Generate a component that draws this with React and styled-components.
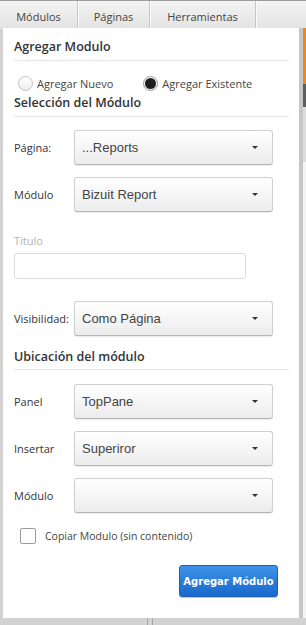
import React from "react";
import styled, { createGlobalStyle } from "styled-components";

const Global = createGlobalStyle`
  html, body { margin: 0; padding: 0; }
  body {
    background: #d2d2d2;
    width: 306px;
    height: 625px;
    overflow: hidden;
    font-family: "Open Sans", "DejaVu Sans", sans-serif;
  }
  * { box-sizing: border-box; }
`;

const Page = styled.div`
  width: 306px;
  height: 625px;
  display: flex;
  flex-direction: column;
  background: #d2d2d2;
`;

const TabBar = styled.div`
  height: 29px;
  display: flex;
  border-top: 1px solid #9c9c9c;
  background: linear-gradient(#f3f3f3, #e3e3e3);
  flex: none;
`;

const Tab = styled.div`
  width: ${(p) => p.$w}px;
  height: 100%;
  display: flex;
  align-items: center;
  justify-content: center;
  padding-top: 2px;
  font-size: 11px;
  color: #444;
  border-right: 1px solid #c6c6c6;
  box-shadow: 1px 0 0 #fafafa;
`;

const Body = styled.div`
  flex: 1;
  display: flex;
  margin-top: -1px;
`;

const Gutter = styled.div`
  width: 3px;
  flex: none;
`;

const Panel = styled.div`
  width: 296px;
  height: 590px;
  flex: none;
  background: #fff;
  padding: 10px 10px 0 11px;
  display: flex;
  flex-direction: column;
`;

const Shadow = styled.div`
  width: 4px;
  flex: none;
  background: #c6c6c6;
`;

const Strip = styled.div`
  width: 3px;
  flex: none;
  display: flex;
  flex-direction: column;
`;

const StripBlock = styled.div`
  height: ${(p) => p.$h}px;
  background: ${(p) => p.$c};
  flex: none;
`;

const Heading = styled.div`
  font-family: "Open Sans", sans-serif;
  font-weight: 600;
  font-size: 12.5px;
  line-height: 18px;
  color: #333;
  padding-bottom: ${(p) => p.$pb ?? 4}px;
  margin-top: ${(p) => p.$mt ?? 0}px;
  border-bottom: 1px solid #e6e6e6;
`;

const RadioRow = styled.div`
  margin-top: 12px;
  height: 20px;
  display: flex;
  align-items: center;
  padding-left: 4px;
  gap: 30px;
`;

const RadioItem = styled.label`
  display: flex;
  align-items: center;
  gap: 4px;
  font-size: 11px;
  color: #444;
`;

const RadioCircle = styled.span`
  width: 15px;
  height: 15px;
  border-radius: 50%;
  border: 1px solid ${(p) => (p.$checked ? "#999" : "#c4c4c4")};
  background: linear-gradient(#fff, #ededed);
  display: flex;
  align-items: center;
  justify-content: center;
  &::after {
    content: "";
    display: ${(p) => (p.$checked ? "block" : "none")};
    width: 11px;
    height: 11px;
    border-radius: 50%;
    background: #1e1e1e;
  }
`;

const FieldRow = styled.div`
  display: flex;
  align-items: center;
  margin-top: ${(p) => p.$mt}px;
`;

const Label = styled.div`
  width: 60px;
  flex: none;
  font-size: 11px;
  color: #333;
`;

const Select = styled.div`
  width: 199px;
  height: 35px;
  border: 1px solid #cfcfcf;
  border-bottom-color: #b5b5b5;
  border-radius: 3px;
  background: linear-gradient(#ffffff, #ececec);
  box-shadow: 0 1px 1px rgba(0, 0, 0, 0.08);
  display: flex;
  align-items: center;
  justify-content: space-between;
  padding: 0 14px 0 7px;
  font-family: "Liberation Sans", Arial, sans-serif;
  font-size: 13px;
  font-weight: normal;
  color: #444;
`;

const Caret = styled.span`
  width: 0;
  height: 0;
  border-left: 3.5px solid transparent;
  border-right: 3.5px solid transparent;
  border-top: 3.5px solid #333;
`;

const FadedLabel = styled.div`
  margin-top: 22px;
  font-size: 11px;
  line-height: 14px;
  color: #b3b3b3;
`;

const TextInput = styled.div`
  margin-top: 5px;
  width: 232px;
  height: 26px;
  border: 1px solid #dcdcdc;
  border-radius: 3px;
  background: #fff;
`;

const CheckRow = styled.label`
  margin-top: 15px;
  padding-left: 6px;
  display: flex;
  align-items: center;
  gap: 9px;
  font-size: 10.5px;
  color: #444;
`;

const CheckBox = styled.span`
  width: 16px;
  height: 16px;
  border: 1px solid #9a9a9a;
  border-radius: 2px;
  background: #fff;
`;

const ButtonRow = styled.div`
  margin-top: 21px;
  display: flex;
  justify-content: flex-end;
  padding-right: 11px;
`;

const Button = styled.button`
  width: 99px;
  height: 32px;
  border: 1px solid #1c5fb3;
  border-radius: 3px;
  background: linear-gradient(#3d93e6, #1a68cc);
  box-shadow: 0 1px 1px rgba(0, 0, 0, 0.25);
  color: #fff;
  font-family: "DejaVu Sans", sans-serif;
  font-weight: bold;
  font-size: 10px;
  padding: 0;
`;

const Footer = styled.div`
  flex: 1;
  display: flex;
  padding-left: 147px;
  gap: 4px;
`;

const Tick = styled.div`
  width: 1px;
  height: 100%;
  background: #a8a8a8;
`;

export default function App() {
  const fields1 = [
    { label: "Página:", value: "...Reports", mt: 13 },
    { label: "Módulo", value: "Bizuit Report", mt: 12 },
  ];
  const fields2 = [
    { label: "Panel", value: "TopPane", mt: 14 },
    { label: "Insertar", value: "Superiror", mt: 12 },
    { label: "Módulo", value: "", mt: 12 },
  ];
  return (
    <>
      <Global />
      <Page>
        <TabBar>
          <Tab $w={78}>Módulos</Tab>
          <Tab $w={72}>Páginas</Tab>
          <Tab $w={106}>Herramientas</Tab>
        </TabBar>
        <Body>
          <Gutter />
          <Panel>
            <Heading>Agregar Modulo</Heading>
            <RadioRow>
              <RadioItem>
                <RadioCircle />
                Agregar Nuevo
              </RadioItem>
              <RadioItem>
                <RadioCircle $checked />
                Agregar Existente
              </RadioItem>
            </RadioRow>
            <Heading $mt={1}>Selección del Módulo</Heading>
            {fields1.map((f) => (
              <FieldRow key={f.label + f.value} $mt={f.mt}>
                <Label>{f.label}</Label>
                <Select>
                  <span>{f.value}</span>
                  <Caret />
                </Select>
              </FieldRow>
            ))}
            <FadedLabel>Titulo</FadedLabel>
            <TextInput />
            <FieldRow $mt={22}>
              <Label>Visibilidad:</Label>
              <Select>
                <span>Como Página</span>
                <Caret />
              </Select>
            </FieldRow>
            <Heading $mt={12} $pb={3}>Ubicación del módulo</Heading>
            {fields2.map((f) => (
              <FieldRow key={f.label + f.value} $mt={f.mt}>
                <Label>{f.label}</Label>
                <Select>
                  <span>{f.value}</span>
                  <Caret />
                </Select>
              </FieldRow>
            ))}
            <CheckRow>
              <CheckBox />
              Copiar Modulo (sin contenido)
            </CheckRow>
            <ButtonRow>
              <Button>Agregar Módulo</Button>
            </ButtonRow>
          </Panel>
          <Shadow />
          <Strip>
            <StripBlock $h={56} $c="#e48a2e" />
            <StripBlock $h={23} $c="#5e5e5e" />
            <StripBlock $h={55} $c="#dcdcdc" />
            <StripBlock $h={456} $c="#f4f4f4" />
          </Strip>
        </Body>
        <Footer>
          <Tick />
          <Tick />
        </Footer>
      </Page>
    </>
  );
}
